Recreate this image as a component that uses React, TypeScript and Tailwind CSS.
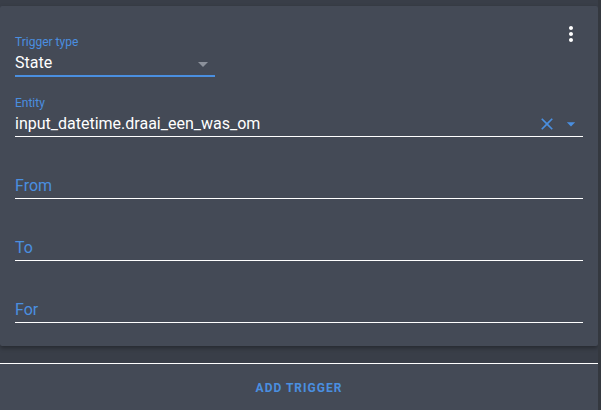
import React from 'react';

const BLUE = 'text-[#4a8fe0]';

function MoreVert() {
  return (
    <svg width="24" height="24" viewBox="0 0 24 24" className="fill-white">
      <path d="M12 8c1.1 0 2-.9 2-2s-.9-2-2-2-2 .9-2 2 .9 2 2 2zm0 2c-1.1 0-2 .9-2 2s.9 2 2 2 2-.9 2-2-.9-2-2-2zm0 6c-1.1 0-2 .9-2 2s.9 2 2 2 2-.9 2-2-.9-2-2-2z" />
    </svg>
  );
}

function DropArrow({ size, className }: { size: number; className: string }) {
  return (
    <svg width={size} height={size} viewBox="0 0 24 24" className={className}>
      <path d="M7 10l5 5 5-5z" />
    </svg>
  );
}

function CloseIcon() {
  return (
    <svg width="20" height="20" viewBox="0 0 24 24" className="fill-[#4a8fe0]">
      <path d="M19 6.41L17.59 5 12 10.59 6.41 5 5 6.41 10.59 12 5 17.59 6.41 19 12 13.41 17.59 19 19 17.59 13.41 12z" />
    </svg>
  );
}

function EmptyField({ label }: { label: string }) {
  return (
    <div className="mt-[20px]">
      <div className="h-[16px]" />
      <div className={`h-[25px] pt-[1px] text-[16px] leading-[24px] ${BLUE}`}>{label}</div>
      <div className="h-px bg-white" />
    </div>
  );
}

export default function App() {
  return (
    <div
      className="flex h-[410px] w-[601px] overflow-hidden bg-[#393e48]"
      style={{ fontFamily: 'Roboto, "Noto Sans", sans-serif' }}
    >
      <div className="flex w-[598px] flex-col pt-[6px]">
        <div className="rounded-[2px] bg-[#444a56] px-[15px] pb-[23px] pt-[16px] shadow-[0_2px_4px_rgba(0,0,0,0.35)]">
          <div className="flex items-start justify-between">
            <div className="w-[200px] pt-[12px]">
              <div className={`h-[16px] text-[12px] leading-[16px] ${BLUE}`}>Trigger type</div>
              <div className="flex h-[25px] items-center justify-between">
                <span className="text-[16px] leading-[24px] text-white">State</span>
                <DropArrow size={24} className="mt-[3px] fill-[#8c919b]" />
              </div>
              <div className="h-[2px] bg-[#4a8fe0]" />
            </div>
            <button className="h-[24px] w-[24px]">
              <MoreVert />
            </button>
          </div>

          <div className="mt-[18px]">
            <div className={`h-[16px] text-[12px] leading-[16px] ${BLUE}`}>Entity</div>
            <div className="flex h-[25px] items-center">
              <span className="flex-1 text-[16px] leading-[24px] text-white">
                input_datetime.draai_een_was_om
              </span>
              <span className="mr-[4px] mt-[1px]">
                <CloseIcon />
              </span>
              <span className="mr-[2px]">
                <DropArrow size={20} className="fill-[#4a8fe0]" />
              </span>
            </div>
            <div className="h-px bg-white" />
          </div>

          <EmptyField label="From" />
          <EmptyField label="To" />
          <EmptyField label="For" />
        </div>

        <div className="h-[17px]" />
        <div className="flex-1 border-t border-white bg-[#444a56] pt-[11px] text-center">
          <span className={`text-[12px] font-bold uppercase leading-[16px] tracking-[1px] ${BLUE}`}>
            Add trigger
          </span>
        </div>
      </div>
      <div className="w-[3px] bg-[#34383f]" />
    </div>
  );
}
